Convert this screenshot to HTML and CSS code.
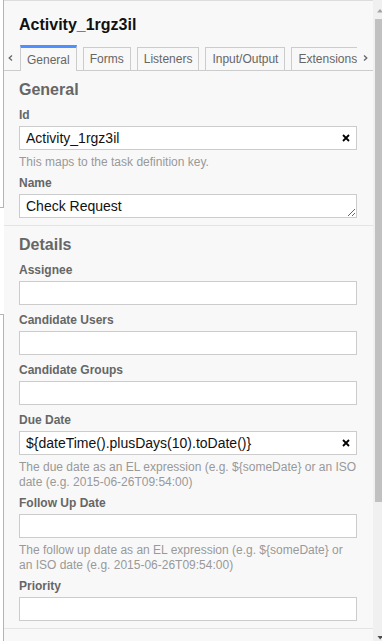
FILE: index.html
```html
<!DOCTYPE html>
<html lang="en">
<head>
  <meta charset="UTF-8" />
  <meta name="viewport" content="width=device-width, initial-scale=1.0"/>
  <title>Properties - Activity_1rgz3il</title>
  <link rel="stylesheet" href="styles.css">
</head>
<body>
  <!-- edge of the diagram canvas peeking out on the left -->
  <div class="canvas-edge">
    <div class="edge-top"></div>
    <div class="edge-gap"></div>
    <div class="edge-bottom"></div>
  </div>

  <aside class="panel">
    <header class="panel-header">
      <div class="panel-title">Activity_1rgz3il</div>
    </header>

    <div class="tabs">
      <span class="tab-arrow left">
        <svg width="5" height="6" viewBox="0 0 5 6"><path d="M4 0.5L1.2 3L4 5.5" fill="none" stroke="#666" stroke-width="1.3"/></svg>
      </span>
      <ul class="tab-list">
        <li class="tab active">General</li>
        <li class="tab">Forms</li>
        <li class="tab">Listeners</li>
        <li class="tab">Input/Output</li>
        <li class="tab">Extensions</li>
      </ul>
      <span class="tab-arrow right">
        <svg width="5" height="6" viewBox="0 0 5 6"><path d="M1 0.5L3.8 3L1 5.5" fill="none" stroke="#666" stroke-width="1.3"/></svg>
      </span>
    </div>

    <section class="group">
      <h2>General</h2>
      <div class="field">
        <label>Id</label>
        <div class="input-wrap">
          <input type="text" value="Activity_1rgz3il">
          <button class="clear" type="button">
            <svg width="8" height="8" viewBox="0 0 8 8"><path d="M1 1L7 7M7 1L1 7" stroke="#000" stroke-width="1.8"/></svg>
          </button>
        </div>
        <p class="description">This maps to the task definition key.</p>
      </div>
      <div class="field">
        <label>Name</label>
        <textarea rows="1">Check Request</textarea>
      </div>
    </section>

    <section class="group">
      <h2>Details</h2>
      <div class="field">
        <label>Assignee</label>
        <div class="input-wrap"><input type="text"></div>
      </div>
      <div class="field">
        <label>Candidate Users</label>
        <div class="input-wrap"><input type="text"></div>
      </div>
      <div class="field">
        <label>Candidate Groups</label>
        <div class="input-wrap"><input type="text"></div>
      </div>
      <div class="field">
        <label>Due Date</label>
        <div class="input-wrap">
          <input type="text" value="${dateTime().plusDays(10).toDate()}">
          <button class="clear" type="button">
            <svg width="8" height="8" viewBox="0 0 8 8"><path d="M1 1L7 7M7 1L1 7" stroke="#000" stroke-width="1.8"/></svg>
          </button>
        </div>
        <p class="description">The due date as an EL expression (e.g. ${someDate} or an ISO date (e.g. 2015-06-26T09:54:00)</p>
      </div>
      <div class="field">
        <label>Follow Up Date</label>
        <div class="input-wrap"><input type="text"></div>
        <p class="description">The follow up date as an EL expression (e.g. ${someDate} or an ISO date (e.g. 2015-06-26T09:54:00)</p>
      </div>
      <div class="field">
        <label>Priority</label>
        <div class="input-wrap"><input type="text"></div>
      </div>
    </section>

    <section class="group">
      <h2>Asynchronous Continuations</h2>
    </section>
  </aside>

  <div class="scrollbar">
    <div class="scroll-up">
      <svg width="9" height="19" viewBox="0 0 9 19"><polygon points="7,9 10,12.5 4,12.5" fill="#a3a3a3"/></svg>
    </div>
    <div class="scroll-thumb"></div>
    <div class="scroll-track"></div>
    <div class="scroll-down">
      <svg width="9" height="7" viewBox="0 0 9 7"><polygon points="4.5,2 10,2 7.2,5.5" fill="#505050"/></svg>
    </div>
  </div>
</body>
</html>
```

FILE: styles.css
```css
/* Reset */
* {
  margin: 0;
  padding: 0;
  box-sizing: border-box;
}

body {
  font-family: "Liberation Sans", Arial, sans-serif;
  background: #fff;
  color: #333;
  display: flex;
  height: 641px;
  overflow: hidden;
}

/* Canvas edge on the left */
.canvas-edge {
  width: 4px;
  flex-shrink: 0;
  display: flex;
  flex-direction: column;
}
.edge-top {
  height: 208px;
  border-right: 1px solid #b4b4b4;
  border-bottom: 1px solid #b4b4b4;
}
.edge-gap { height: 106px; }
.edge-bottom {
  flex: 1;
  border-right: 1px solid #b4b4b4;
  border-top: 1px solid #b4b4b4;
}

/* Panel */
.panel {
  flex: 1;
  min-width: 0;
  background: #f8f8f8;
  border-top: 1px solid #dcdcdc;
  overflow: hidden;
}

.panel-header {
  padding: 15px 15px 11px;
}
.panel-title {
  font-size: 16px;
  line-height: 18px;
  font-weight: bold;
  color: #111;
}

/* Tabs */
.tabs {
  display: flex;
  height: 26px;
  border-bottom: 1px solid #ccc;
}
.tab-arrow {
  width: 16px;
  flex-shrink: 0;
  display: flex;
  align-items: center;
}
.tab-arrow.left { padding-left: 4px; }
.tab-arrow.right { padding-left: 6px; }

.tab-list {
  flex: 1;
  min-width: 0;
  height: 26px;
  margin-bottom: -1px;
  list-style: none;
  display: flex;
  align-items: flex-end;
  gap: 6px;
  overflow: hidden;
}
.tab {
  flex-shrink: 0;
  height: 23px;
  margin-bottom: 1px;
  padding: 0 6px;
  border: 1px solid #ccc;
  border-bottom: none;
  background: #f8f8f8;
  font-size: 12px;
  color: #666;
  display: flex;
  align-items: center;
}
.tab.active {
  height: 26px;
  margin-bottom: 0;
  border-top: 3px solid #4d90fe;
}

/* Groups */
.group {
  padding: 10px 16px 7px 15px;
}
.group + .group {
  border-top: 1px solid #e4e4e4;
}
.group h2 {
  font-size: 16px;
  line-height: 18px;
  font-weight: bold;
  color: #666;
  margin-bottom: 9px;
}

.field { margin-bottom: 8px; }
.field:last-child { margin-bottom: 0; }

.field label {
  display: block;
  font-size: 12px;
  line-height: 15px;
  font-weight: bold;
  color: #666;
  margin-bottom: 3px;
}

.input-wrap {
  display: flex;
  align-items: center;
  height: 24px;
  background: #fff;
  border: 1px solid #ccc;
}
.input-wrap input {
  flex: 1;
  min-width: 0;
  height: 22px;
  padding: 0 6px;
  border: none;
  outline: none;
  background: none;
  font: 14px "Liberation Sans", Arial, sans-serif;
  color: #111;
}
.clear {
  width: 20px;
  height: 22px;
  flex-shrink: 0;
  border: none;
  background: none;
  display: flex;
  align-items: center;
  justify-content: center;
}

textarea {
  display: block;
  width: 100%;
  height: 24px;
  padding: 3px 6px;
  border: 1px solid #ccc;
  background: #fff;
  font: 14px "Liberation Sans", Arial, sans-serif;
  color: #111;
  resize: vertical;
  overflow: hidden;
  outline: none;
}

.description {
  margin-top: 4px;
  margin-bottom: -2px;
  padding-top: 1px;
  font-size: 12px;
  line-height: 15px;
  color: #999;
}

/* Scrollbar */
.scrollbar {
  width: 9px;
  flex-shrink: 0;
  background: #f0f0f0;
  display: flex;
  flex-direction: column;
  overflow: hidden;
}
.scroll-up { height: 19px; }
.scroll-up svg, .scroll-down svg { display: block; }
.scroll-thumb {
  height: 483px;
  margin-left: 2px;
  background: #c1c1c1;
}
.scroll-track { flex: 1; }
.scroll-down { height: 7px; }
```
